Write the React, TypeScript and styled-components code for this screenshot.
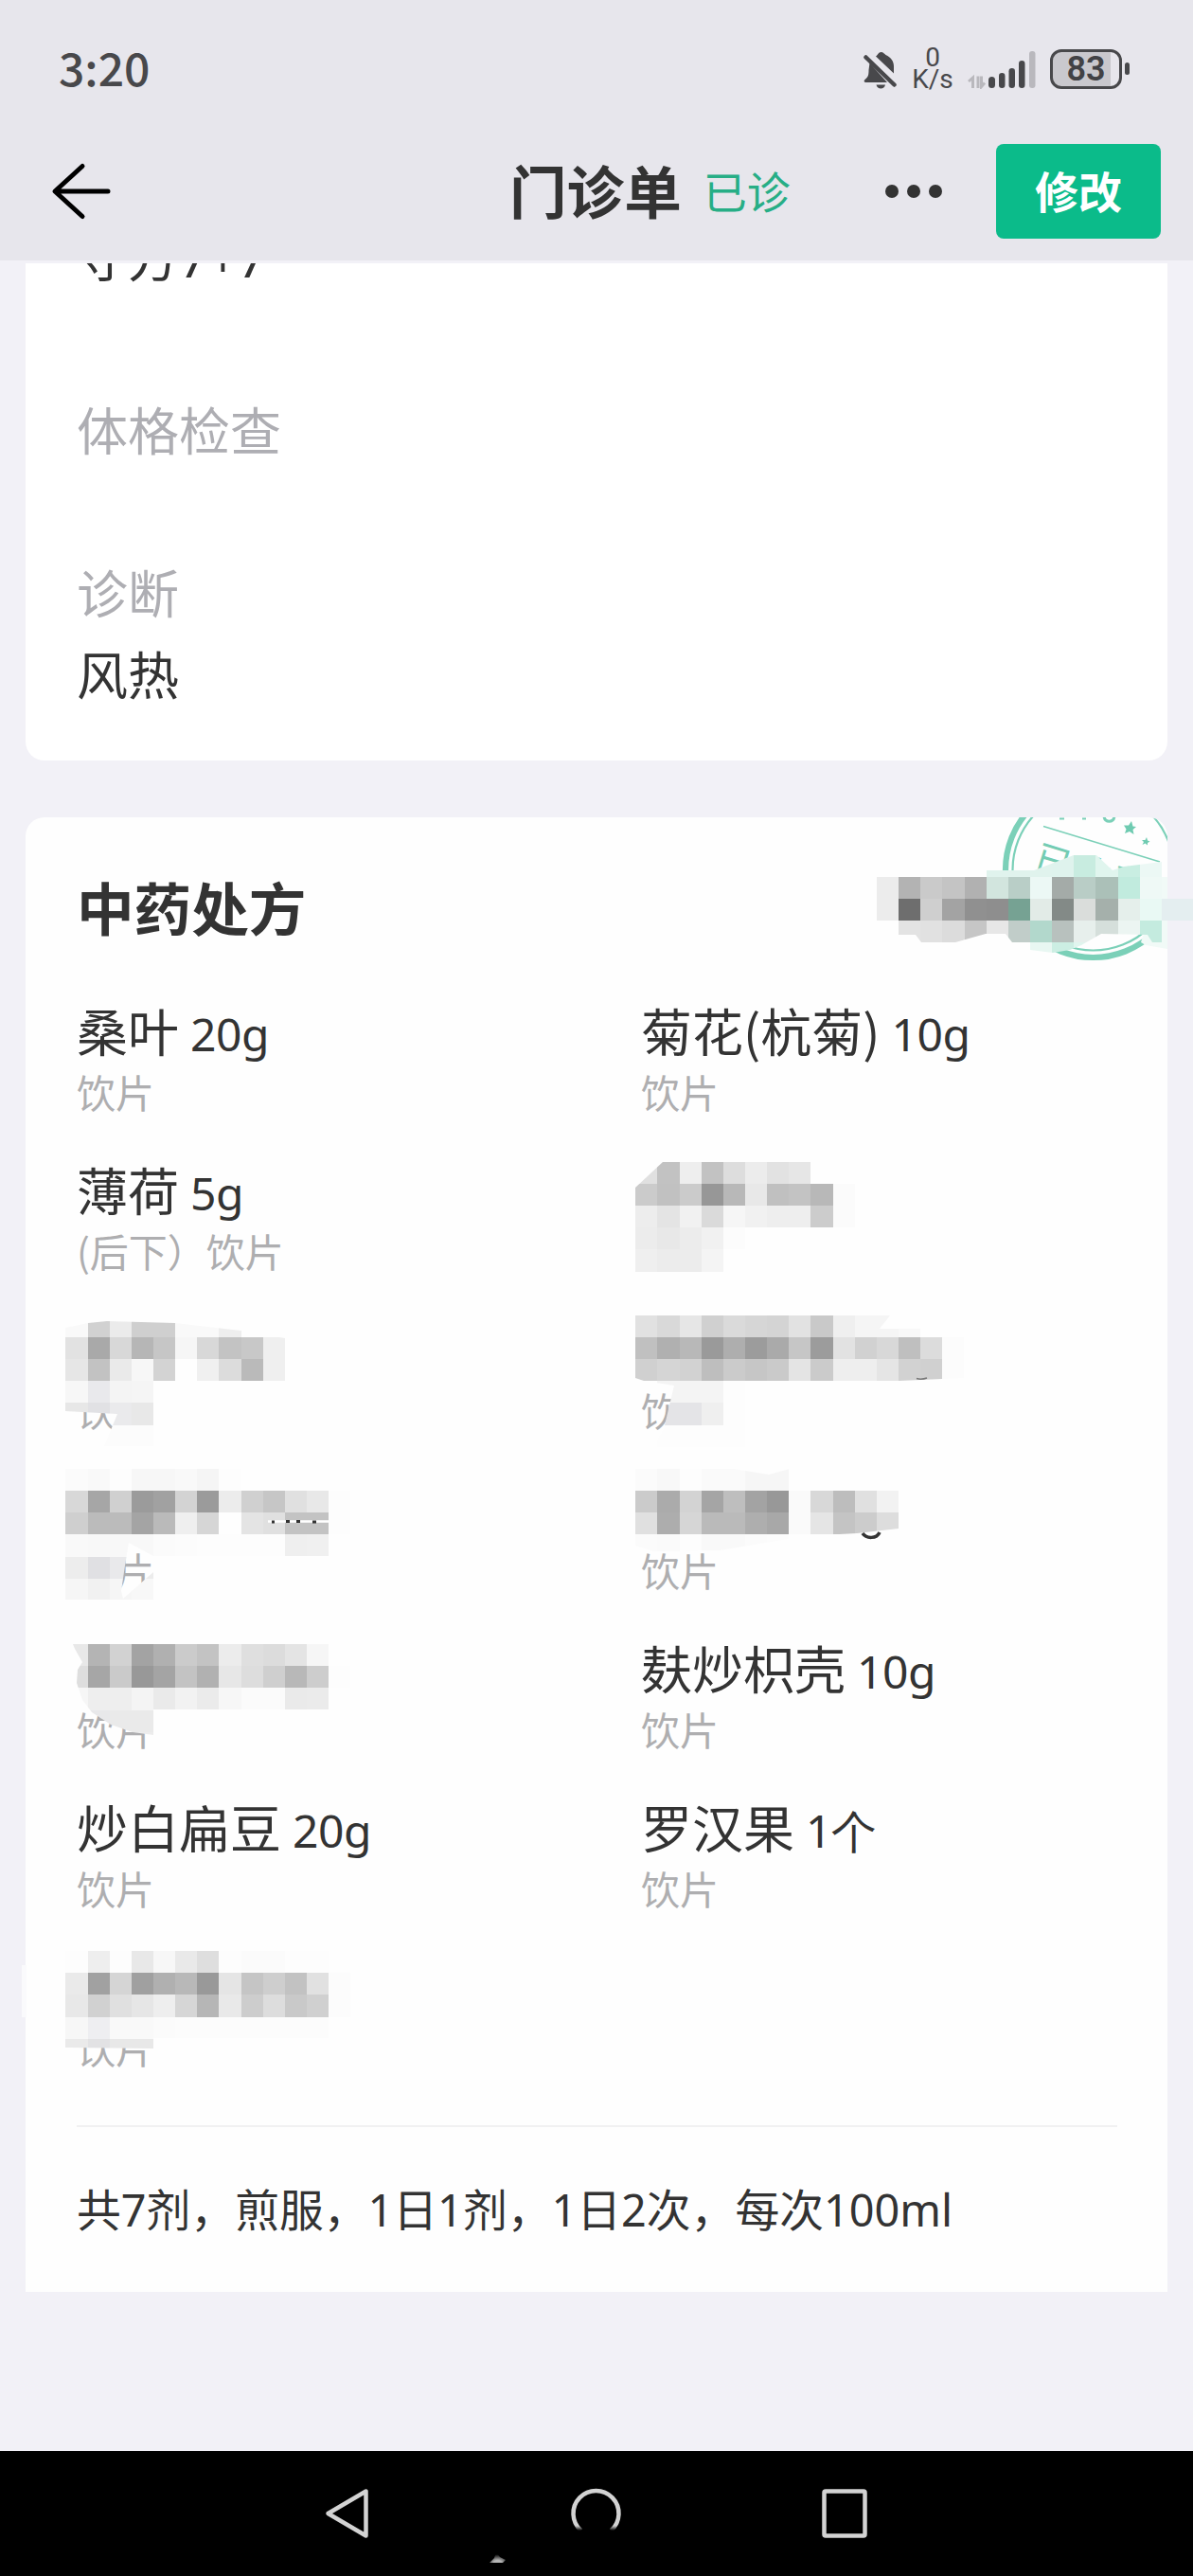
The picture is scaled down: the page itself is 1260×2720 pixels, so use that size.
import React from 'react';
import styled, { createGlobalStyle } from 'styled-components';

const GlobalStyle = createGlobalStyle`
  * {
    box-sizing: border-box;
  }
  body {
    margin: 0;
    background-color: #f2f1f7;
    font-family: 'Noto Sans CJK SC', sans-serif;
    color: #333;
  }
`;

const Page = styled.div`
  position: relative;
  display: flex;
  flex-direction: column;
  width: 1260px;
  height: 2720px;
  overflow: hidden;
  background-color: #f2f1f7;
`;

const StatusBar = styled.div`
  display: flex;
  align-items: center;
  justify-content: space-between;
  height: 130px;
  padding: 15px 67px 0 62px;
  background-color: #e7e6ec;
`;

const Clock = styled.div`
  padding-bottom: 5px;
  font-size: 48px;
  font-weight: 500;
  line-height: 60px;
  color: #48484b;
`;

const StatusIcons = styled.div`
  display: flex;
  align-items: center;
`;

const NetSpeed = styled.div`
  display: flex;
  flex-direction: column;
  align-items: center;
  width: 44px;
  margin: 0 15px 0 15px;
  padding-bottom: 1px;
  font-family: Roboto, sans-serif;
  font-size: 28px;
  line-height: 23px;
  color: #48484b;
`;

const Battery = styled.div`
  display: flex;
  align-items: center;
  margin-left: 15px;
`;

const BatteryBody = styled.div<{ $level: number }>`
  width: 76px;
  height: 42px;
  border: 3px solid #48484b;
  border-radius: 12px;
  background: linear-gradient(to right, #c9c8cd ${(p) => p.$level}%, #e7e6ec ${(p) => p.$level}%);
  font-family: Roboto, sans-serif;
  font-size: 36px;
  font-weight: 600;
  line-height: 37px;
  text-align: center;
  color: #424245;
`;

const BatteryTip = styled.div`
  width: 5px;
  height: 13px;
  margin-left: 3px;
  border-radius: 3px;
  background-color: #48484b;
`;

const NavBar = styled.header`
  display: grid;
  grid-template-columns: 538px 1fr auto auto;
  align-items: center;
  height: 145px;
  padding: 0 34px 2px 0;
  background-color: #e7e6ec;
`;

const BackButton = styled.button`
  width: 70px;
  height: 64px;
  margin-left: 51px;
  padding: 0;
  border: none;
  background: none;
`;

const TitleGroup = styled.div`
  display: flex;
  align-items: center;
  padding-bottom: 4px;
`;

const Title = styled.h1`
  margin: 0;
  font-size: 60.6px;
  font-weight: 700;
  line-height: 90px;
`;

const VisitStatus = styled.span`
  margin-left: 23px;
  font-size: 46px;
  line-height: 90px;
  color: #27ae86;
`;

const MoreButton = styled.button`
  display: flex;
  gap: 9px;
  margin-right: 57px;
  padding: 0;
  border: none;
  background: none;
`;

const Dot = styled.i`
  width: 14px;
  height: 14px;
  border-radius: 50%;
  background-color: #333;
`;

const EditButton = styled.button`
  width: 174px;
  height: 100px;
  padding: 0 0 4px;
  border: none;
  border-radius: 8px;
  background-color: #0bbb8a;
  font-family: inherit;
  font-size: 46px;
  font-weight: 700;
  line-height: 84px;
  color: #fff;
`;

const Content = styled.main`
  display: flex;
  flex-direction: column;
  gap: 60px;
  height: 2313px;
  padding: 3px 27px 0;
`;

const RecordCard = styled.section`
  height: 525px;
  padding-left: 54px;
  border-radius: 0 0 20px 20px;
  background-color: #fff;
  overflow: hidden;
`;

const Line = styled.p<{ $muted?: boolean }>`
  height: 86px;
  margin: 0;
  font-size: 54px;
  line-height: 80px;
  color: ${(p) => (p.$muted ? '#aeaeb3' : '#333')};
`;

const FirstLine = styled(Line)`
  height: 95px;
  margin-top: -46px;
  font-family: 'Noto Sans', 'Noto Sans CJK SC', sans-serif;
`;

const PrescriptionCard = styled.section`
  position: relative;
  height: 1557px;
  padding: 52px 53px 0 54px;
  border-radius: 20px 20px 0 0;
  background-color: #fefefe;
  overflow: hidden;
`;

const CardTitle = styled.h2`
  margin: 0 0 51px;
  font-size: 60.6px;
  font-weight: 700;
  line-height: 84px;
`;

const StampBox = styled.div`
  position: absolute;
  top: 0;
  right: 0;
  width: 180px;
  height: 160px;
`;

const HerbGrid = styled.div`
  display: grid;
  grid-template-columns: 596px 1fr;
  row-gap: 40.2px;
`;

const Herb = styled.div`
  height: 128px;
`;

const HerbName = styled.div`
  height: 77px;
  font-size: 54px;
  line-height: 76px;
  white-space: nowrap;
`;

const Dose = styled.span`
  margin-left: 12px;
  font-family: 'Noto Sans', sans-serif;
  font-size: 48px;
  line-height: 60px;
  letter-spacing: -0.5px;
  vertical-align: 1px;
`;

const HerbNote = styled.div`
  font-size: 41px;
  line-height: 50px;
  color: #aeaeb0;
`;

const Summary = styled.p`
  margin: 57px 0 0;
  border-top: 2px solid #f1f1f2;
  padding-top: 51px;
  font-family: 'Noto Sans', 'Noto Sans CJK SC', sans-serif;
  font-size: 46.8px;
  line-height: 72px;
  white-space: nowrap;
`;

const SystemNav = styled.footer`
  height: 132px;
  background-color: #000;
`;

const RedactionLayer = styled.svg`
  position: absolute;
  inset: 0;
  pointer-events: none;
`;

interface HerbItem {
  name?: string;
  dose?: string;
  note?: string;
}

const herbs: HerbItem[] = [
  { name: '桑叶', dose: '20g', note: '饮片' },
  { name: '菊花(杭菊)', dose: '10g', note: '饮片' },
  { name: '薄荷', dose: '5g', note: '(后下）饮片' },
  {},
  { note: '饮片' },
  { note: '饮片' },
  { note: '饮片' },
  { note: '饮片' },
  { note: '饮片' },
  { name: '麸炒枳壳', dose: '10g', note: '饮片' },
  { name: '炒白扁豆', dose: '20g', note: '饮片' },
  { name: '罗汉果', dose: '1个', note: '饮片' },
  { note: '饮片' },
];

// size of one mosaic block
const CELL = 23.148;

interface MosaicData {
  id: string;
  col: number;
  row: number;
  clip: string;
  // one string per row; two digits are a grey, six an rgb colour, -- is empty
  rows: string[];
}

const mosaics: MosaicData[] = [
  {
    id: 'doctor',
    col: 40,
    row: 39,
    clip: '925,926 1041,926 1041,919 1092,919 1134,903 1157,902 1175,919 1187,915 1227,910 1227,949 1260,949 1260,972 1227,972 1227,995 1217,995 1212,987 1163,986 1142,998 1130,1003 1112,1006 1088,1003 1088,995 1069,995 1062,986 1041,986 1009,995 973,995 967,987 949,987 949,972 925,972',
    rows: [
      '-- -- -- -- -- e0f3ed e0f3ed e0f3ed dff3ed c8ece0 e0f5ee c9eee2 ecf8f5',
      'ec b3 ca c4 b1 d2e5de b9cec7 ecf8f5 a4aba8 b9cdc6 abc0b8 c1ebde eff9f6',
      'ec 6e cf a3 90 8e 76a293 e2ebe7 838a87 dadddb a5b0ab e5efeb e9f9f4 e4eef0 e4eef0',
      '-- e3 e1 dc c6 e7 c1cdc9 b2d8cc b8c1be e7efec d5dfdb ecf5f2 c4ebdf',
      '-- -- -- -- -- -- -- e8f7f2 cceee3 e0f5ee e8f7f2',
    ],
  },
  {
    id: 'r2',
    col: 29,
    row: 53,
    clip: '671,1254 701,1226 910,1226 910,1345 671,1345',
    rows: [
      'e0 c2 ee c2 dd ec e2 e6',
      'cb c1 cb 97 b8 e8 c0 c3 b8 fb',
      'ed e4 f1 da f6 f1 ee ee cc fb',
      'ec e8 ec f1 fc',
      'ef ec ec f4',
    ],
  },
  {
    id: 'l3',
    col: 3,
    row: 60,
    clip: '69,1402 93,1397 113,1395 185,1397 254,1405 301,1413 301,1458 162,1458 162,1527 110,1527 124,1493 69,1490',
    rows: [
      'f9 d1 eb cf cf f9 f9 ee',
      'e2 a9 d8 b6 c6 f6 d8 c3 c8 ef',
      'e6 c2 ea f7 d3 fe f0 dc ba ef',
      'f7 e9e9ec f4 f5 fe',
      'e7 e1e1e4 eaeaec e8',
      '-- fc fc fc',
    ],
  },
  {
    id: 'r3',
    col: 29,
    row: 60,
    clip: '671,1389 940,1389 929,1403 1018,1403 1018,1455 995,1456 950,1458 790,1458 790,1528 690,1528 701,1509 712,1463 680,1458 671,1455',
    rows: [
      'e1 d9 e6 d0 da d6 d4 e2 c9 ef f5 f5 f8',
      'c0 b0 b8 9a ae 9c aa c6 9c e2 d1 d8 bf dc fc',
      'd0 d5 d2 be cb c6 ca e4 cb ee ee e5 d2 d0 fc',
      '-- f4 f4 f4 fd',
      '-- e4e4e7 e4e4e7 ef fd',
      '-- fd fd fd fd',
    ],
  },
  {
    id: 'l4',
    col: 3,
    row: 67,
    clip: '69,1551 370,1551 370,1643 162,1643 136,1629 132,1653 128,1680 130,1688 162,1660 162,1689 69,1689',
    rows: [
      'fb f9 fd f7 f7 f9 f5 fd',
      'd8 a6 d0 9b a1 d3 9b ec d0 c6 e0 e8 fd',
      'cf bb bb a4 ba ef d6 fe e4 e0 c3 c3 fd',
      'f9 f8 f8 f8 fb fc fd fd fd fd ef f0',
      'ed e0e0e3 e9e9eb ec',
      'f6 f1 f6 f8',
    ],
  },
  {
    id: 'r4',
    col: 29,
    row: 67,
    clip: '671,1551 775,1551 812,1557 834,1551 834,1574 949,1574 949,1614 905,1619 850,1622 760,1637 690,1638 671,1632',
    rows: [
      'fb f8 fd fa fa f6 f6',
      'cb ab d3 a5 be a3 98 fa d8 bd e0 f2',
      'e0 ad d6 ba ba ae a8 fa e5 c4 cc dd',
      'fb fa fd f9 f9 fb fc',
    ],
  },
  {
    id: 'l5',
    col: 3,
    row: 75,
    clip: '77,1736 370,1736 370,1805 162,1805 162,1832 140,1829 117,1821 97,1808 87,1795 81,1777 82,1763 87,1755 79,1741',
    rows: [
      'e8 b4 d2 a3 b0 cb c3 ec df dc e4 f6',
      'de a6 ca 98 a4 c3 b1 e7 dd cf b8 cd fd',
      'f6 ee ee f4 ea f2 eb f7 fb fb ea eb',
      'f6 e8e8ea ea ea',
      '-- -- -- ec',
    ],
  },
  {
    id: 'l7',
    col: 3,
    row: 89,
    clip: '69,2060 370,2060 370,2152 162,2152 162,2163 69,2162',
    rows: [
      'fd ee fd e8 f7 e9 de fd fb fb fd fd',
      'ea a1 d5 a0 b0 b8 99 e5 c5 ce c2 e1 fc',
      'e8 d1 e0 e6 ee d6 b6 e9 cd dd c9 d0 fc',
      'f7 eeeef1 f9 f9 fb fc fc fc fc fc fc fc',
      'ea e2e2e4 e8 e8',
    ],
  },
];

const Mosaic: React.FC<{ data: MosaicData }> = ({ data }) => (
  <g>
    <clipPath id={data.id}>
      <polygon points={data.clip} />
    </clipPath>
    <g clipPath={`url(#${data.id})`}>
      {data.rows.map((line, r) =>
        line.split(' ').map((tone, c) =>
          tone === '--' ? null : (
            <rect
              key={`${r}-${c}`}
              x={Math.round((data.col + c) * CELL)}
              y={Math.round((data.row + r) * CELL)}
              width={Math.round((data.col + c + 1) * CELL) - Math.round((data.col + c) * CELL)}
              height={Math.round((data.row + r + 1) * CELL) - Math.round((data.row + r) * CELL)}
              fill={`#${tone.length === 2 ? tone.repeat(3) : tone}`}
            />
          )
        )
      )}
    </g>
  </g>
);

const MutedBell: React.FC = () => (
  <svg width="36" height="42" viewBox="0 0 36 42">
    <path
      d="M13 7.500C15 6 16 3 18.500 3S22 5 23.500 6C29 8.500 32 12.500 32 18V25.500ZM6.500 14.500L25 35H2.500C0.500 35 0 33 1.500 32C5 29.500 5.500 27 5.500 22Z"
      fill="#48484b"
    />
    <path d="M2.500 8.500L32.500 37.500" stroke="#48484b" strokeWidth="4.500" strokeLinecap="round" />
    <path d="M13.500 37.500H23C22.500 40 20.500 41.500 18.300 41.500S14 40 13.500 37.500Z" fill="#48484b" />
  </svg>
);

const Signal: React.FC = () => (
  <svg width="72" height="42" viewBox="0 0 72 42">
    <g fill="none" stroke="#b9b8bd" strokeWidth="3">
      <path d="M1 34L5.500 30V41M11 28.500V41M14.500 28.500V39.500L18 35.500" />
    </g>
    <g fill="#48484b">
      <rect x="22" y="29" width="7" height="12" rx="3.500" />
      <rect x="33" y="25" width="6.500" height="16" rx="3.200" />
      <rect x="43.500" y="20" width="6.500" height="21" rx="3.200" />
      <rect x="54" y="12" width="6.500" height="29" rx="3.200" />
    </g>
    <rect x="65" y="2" width="6.500" height="39" rx="3" fill="#b9b8bd" />
  </svg>
);

const Stamp: React.FC = () => (
  <StampBox>
    <svg width="180" height="160" viewBox="1053 863 180 160">
      <g fill="none" stroke="#7bd0b8">
        <circle cx="1154.500" cy="918.500" r="92.500" strokeWidth="6.200" />
        <circle cx="1154.500" cy="918.500" r="85" strokeWidth="2.200" />
        <path d="M1102 872.500L1225 910" strokeWidth="1.400" />
        <path d="M1166 862C1167 869 1176 869 1177 862" strokeWidth="3" />
        <path d="M1119 864.500H1124M1143 864.500H1147" strokeWidth="2" />
      </g>
      <g fill="#6fcbb1">
        <path d="M1195 867L1196.500 872.500L1200 873L1196.500 876L1197.500 881L1193 878L1188 880L1189.500 875.500L1187 871.500L1192 871.500Z" />
        <path d="M1211 884L1212 887.500L1214.500 888.500L1212 890L1212 892.500L1209.500 890.500L1206.500 892L1208 889L1206 887L1209.500 887Z" />
      </g>
      <text x="1090" y="918" fontSize="39" letterSpacing="2" fill="#74ccb3" transform="rotate(17 1090 918)">
        已收费
      </text>
    </svg>
  </StampBox>
);

const SystemIcons: React.FC = () => (
  <svg width="1260" height="132" viewBox="0 0 1260 132">
    <defs>
      <linearGradient id="fade" x1="0" y1="0" x2="0" y2="1">
        <stop offset="0.880" stopColor="#d3d3d3" />
        <stop offset="1" stopColor="#d3d3d3" stopOpacity="0" />
      </linearGradient>
      <radialGradient id="spark" cx="0.500" cy="1" r="0.800">
        <stop offset="0.300" stopColor="#b5b5b5" />
        <stop offset="1" stopColor="#000" />
      </radialGradient>
    </defs>
    <g fill="none" stroke="#d3d3d3" strokeWidth="4.500" strokeLinejoin="round">
      <path d="M386.500 42.500V89.500L346.500 66Z" />
      <rect x="870.500" y="42.500" width="43" height="47" rx="1.500" />
    </g>
    <path d="M613.600 84A24 24 0 1 1 645.400 84" fill="none" stroke="url(#fade)" strokeWidth="4.500" />
    <path d="M517 118L522 113L524 107L528 112L534 115L531 118Z" fill="url(#spark)" />
  </svg>
);

const App: React.FC = () => {
  return (
    <Page>
      <GlobalStyle />
      <StatusBar>
        <Clock>3:20</Clock>
        <StatusIcons>
          <MutedBell />
          <NetSpeed>
            <span>0</span>
            <span>K/s</span>
          </NetSpeed>
          <Signal />
          <Battery>
            <BatteryBody $level={87}>83</BatteryBody>
            <BatteryTip />
          </Battery>
        </StatusIcons>
      </StatusBar>
      <NavBar>
        <BackButton aria-label="返回">
          <svg width="70" height="64" viewBox="0 0 70 64">
            <path
              d="M36 5.500L7 32L36 58.500M8 32H63"
              fill="none"
              stroke="#000"
              strokeWidth="5"
              strokeLinecap="round"
              strokeLinejoin="round"
            />
          </svg>
        </BackButton>
        <TitleGroup>
          <Title>门诊单</Title>
          <VisitStatus>已诊</VisitStatus>
        </TitleGroup>
        <MoreButton aria-label="更多">
          <Dot />
          <Dot />
          <Dot />
        </MoreButton>
        <EditButton>修改</EditButton>
      </NavBar>
      <Content>
        <RecordCard>
          <FirstLine>守方7+7</FirstLine>
          <Line />
          <Line $muted>体格检查</Line>
          <Line />
          <Line $muted>诊断</Line>
          <Line>风热</Line>
        </RecordCard>
        <PrescriptionCard>
          <Stamp />
          <CardTitle>中药处方</CardTitle>
          <HerbGrid>
            {herbs.map((herb, i) => (
              <Herb key={i}>
                <HerbName>
                  {herb.name}
                  {herb.dose && <Dose>{herb.dose}</Dose>}
                </HerbName>
                <HerbNote>{herb.note}</HerbNote>
              </Herb>
            ))}
          </HerbGrid>
          <Summary>共7剂，煎服，1日1剂，1日2次，每次100ml</Summary>
        </PrescriptionCard>
      </Content>
      <SystemNav>
        <SystemIcons />
      </SystemNav>
      <RedactionLayer width="1260" height="2720" viewBox="0 0 1260 2720">
        <path d="M23 2075H28V2130H23Z" fill="#fafafc" />
        <path d="M1205 995L1227 926H1233V1002L1210 998Z" fill="#f1faf7" />
        {mosaics.map((m) => (
          <Mosaic key={m.id} data={m} />
        ))}
        <path d="M283 1606.500H347" stroke="#fff" strokeWidth="2.500" />
        <path d="M287 1607H290M302 1606.500H306M313 1606.500H317M330 1607H334" stroke="#333" strokeWidth="3" />
        <path d="M968 1455.500Q973 1457 979 1455" fill="none" stroke="#777" strokeWidth="1.500" />
        <path d="M911 1619C915 1625 926 1625 929 1618" fill="none" stroke="#333" strokeWidth="3.500" />
      </RedactionLayer>
    </Page>
  );
};

export default App;
